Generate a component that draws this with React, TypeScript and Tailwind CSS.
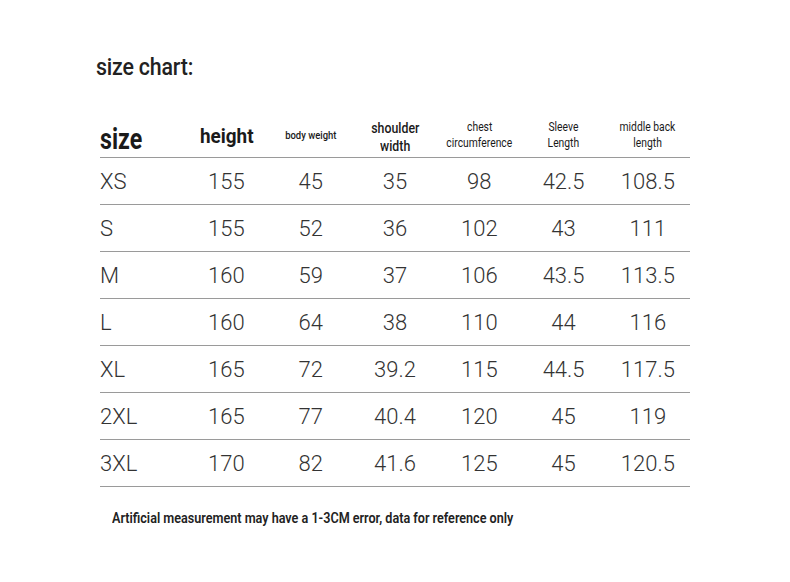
const HEAD = "'Roboto', 'Liberation Sans', sans-serif";
const BODY = "'Roboto', 'Liberation Sans', Arial, sans-serif";

const ROWS: string[][] = [
  ["XS", "155", "45", "35", "98", "42.5", "108.5"],
  ["S", "155", "52", "36", "102", "43", "111"],
  ["M", "160", "59", "37", "106", "43.5", "113.5"],
  ["L", "160", "64", "38", "110", "44", "116"],
  ["XL", "165", "72", "39.2", "115", "44.5", "117.5"],
  ["2XL", "165", "77", "40.4", "120", "45", "119"],
  ["3XL", "170", "82", "41.6", "125", "45", "120.5"],
];

export default function App() {
  return (
    <div className="w-[790px] h-[582px] bg-white text-[#222] pt-[53px] pl-[96px]">
      <h1
        className="text-[24px] leading-[28px] font-medium origin-left scale-x-[0.89] tracking-[-0.2px]"
        style={{ fontFamily: HEAD }}
      >
        size chart:
      </h1>

      <div className="w-[590px] ml-[4px] mt-[31px]">
        <div
          className="grid grid-cols-7 h-[46px] border-b border-[#9a9a9a] text-[#1a1a1a]"
          style={{ fontFamily: HEAD }}
        >
          <div className="flex items-end pb-[3px]">
            <span className="text-[29px] leading-[30px] font-bold inline-block origin-left scale-x-[0.8]">size</span>
          </div>
          <div className="flex items-end justify-center pb-[9px]">
            <span className="text-[21px] leading-[24px] font-bold inline-block scale-x-[0.9]">height</span>
          </div>
          <div className="flex items-end justify-center pb-[14px]">
            <span className="text-[11px] leading-[14px] font-medium inline-block scale-x-[0.86] whitespace-nowrap">body weight</span>
          </div>
          <div className="flex flex-col items-center justify-end pb-[2px] text-[14px] leading-[18px] font-medium">
            <span className="inline-block scale-x-[0.88]">shoulder</span>
            <span className="inline-block scale-x-[0.88]">width</span>
          </div>
          <div className="flex flex-col items-center justify-end pb-[6px] text-[12px] leading-[16px]">
            <span className="inline-block scale-x-[0.86]">chest</span>
            <span className="inline-block scale-x-[0.86] whitespace-nowrap">circumference</span>
          </div>
          <div className="flex flex-col items-center justify-end pb-[6px] text-[12px] leading-[16px]">
            <span className="inline-block scale-x-[0.86]">Sleeve</span>
            <span className="inline-block scale-x-[0.86]">Length</span>
          </div>
          <div className="flex flex-col items-center justify-end pb-[6px] text-[12px] leading-[16px]">
            <span className="inline-block scale-x-[0.86] whitespace-nowrap">middle back</span>
            <span className="inline-block scale-x-[0.86]">length</span>
          </div>
        </div>

        {ROWS.map((row) => (
          <div
            key={row[0]}
            className="grid grid-cols-7 h-[47px] border-b border-[#9a9a9a] items-center text-[22px] font-light text-[#333]"
            style={{ fontFamily: BODY }}
          >
            {row.map((cell, i) => (
              <div key={i} className={i === 0 ? "text-left" : "text-center"}>
                {cell}
              </div>
            ))}
          </div>
        ))}
      </div>

      <p
        className="mt-[22px] ml-[16px] text-[14px] leading-[18px] font-semibold origin-left scale-x-[0.9] text-[#222] whitespace-nowrap"
        style={{ fontFamily: HEAD }}
      >
        Artificial measurement may have a 1-3CM error, data for reference only
      </p>
    </div>
  );
}
